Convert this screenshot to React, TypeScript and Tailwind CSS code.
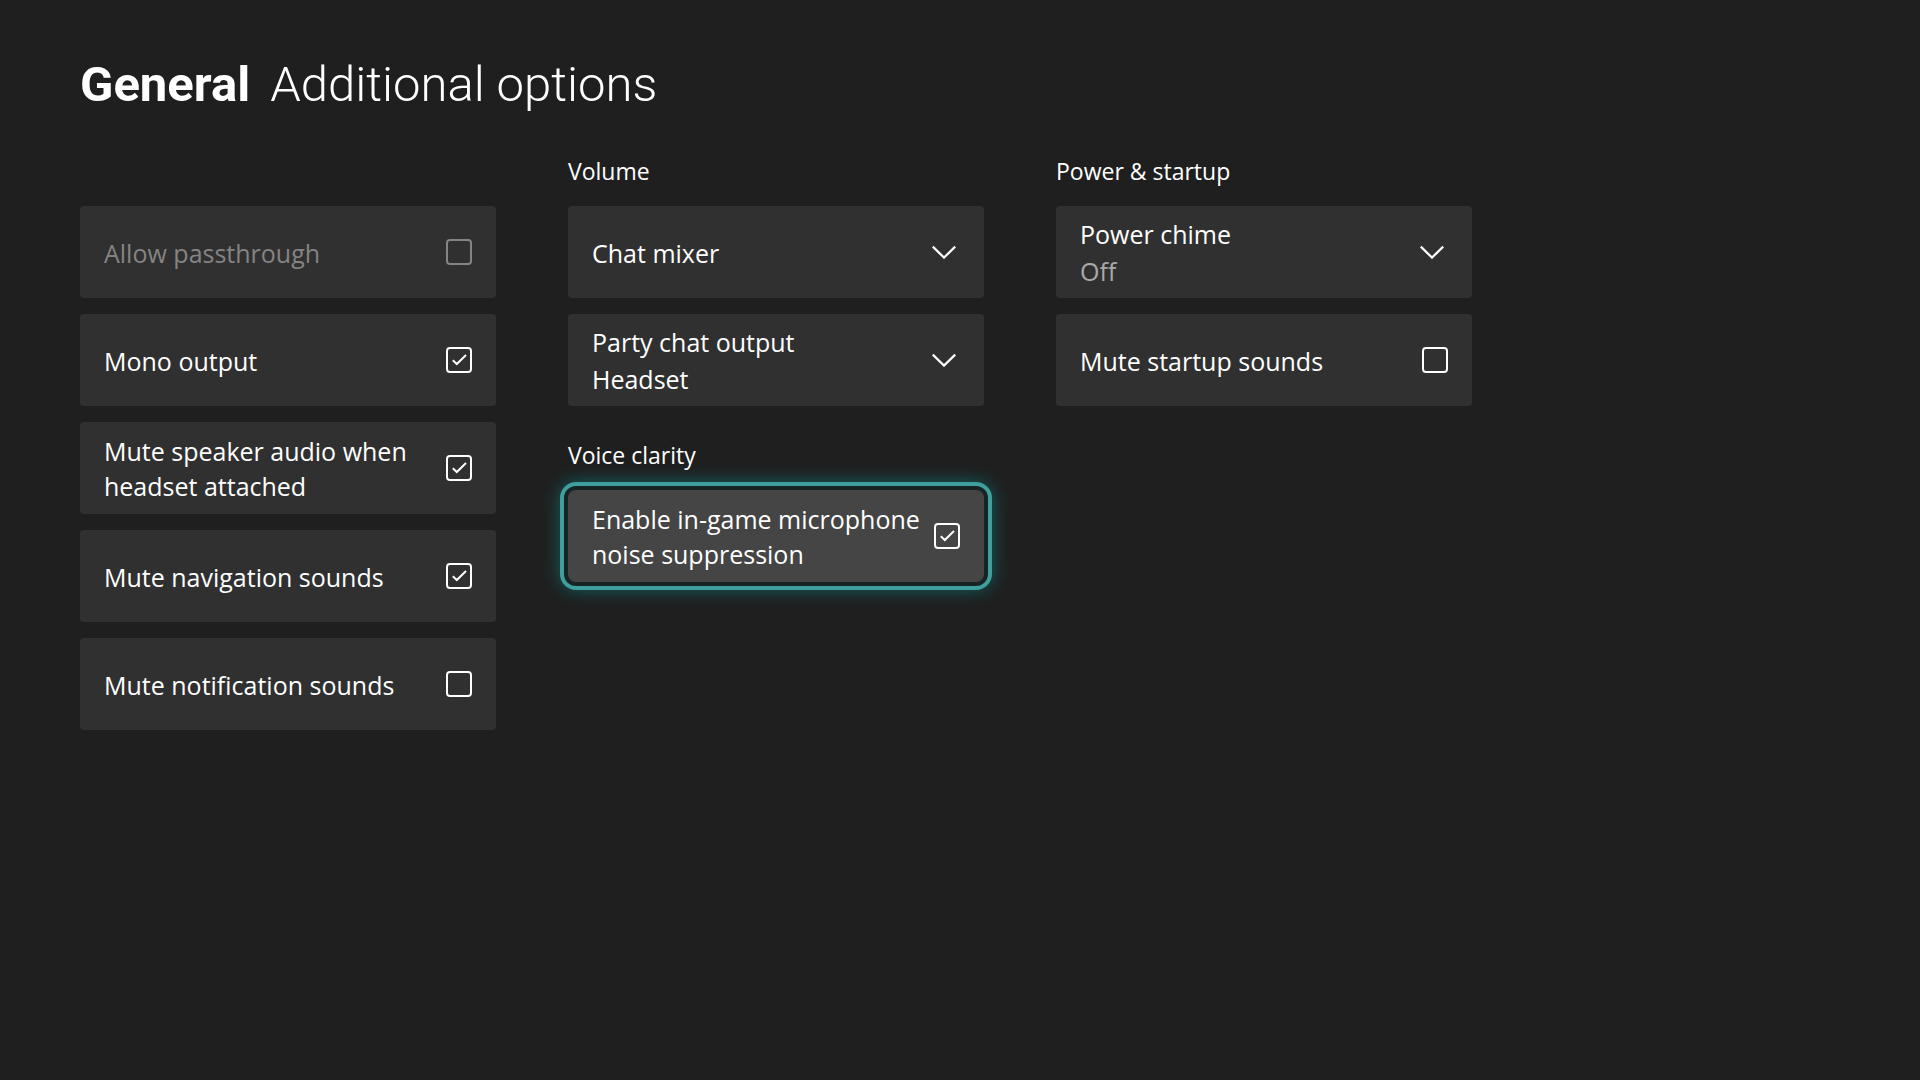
import React, { useState } from 'react';

interface CheckCardProps {
  label: string;
  defaultChecked?: boolean;
  disabled?: boolean;
  focused?: boolean;
}

interface SelectCardProps {
  label: string;
  options: string[];
  muted?: boolean;
}

const CheckCard: React.FC<CheckCardProps> = ({ label, defaultChecked = false, disabled = false, focused = false }) => {
  const [checked, setChecked] = useState(defaultChecked);

  return (
    <label
      className={`flex min-h-[92px] items-center justify-between gap-3 px-6 text-[25px] leading-[35px] ${
        disabled ? 'text-[#848484]' : 'text-white'
      } ${
        focused
          ? 'rounded-lg bg-[#454545] shadow-[0_0_0_4px_#182424,0_0_0_8px_#3f9f9f,0_0_18px_8px_#10605f]'
          : 'rounded bg-[#303030]'
      }`}
    >
      <span className="pt-0.5">{label}</span>
      <span className="relative h-[26px] w-[26px] shrink-0">
        <input
          type="checkbox"
          checked={checked}
          disabled={disabled}
          onChange={(e) => setChecked(e.target.checked)}
          className="block h-[26px] w-[26px] appearance-none rounded border-2 border-current outline-none"
        />
        {checked && (
          <svg viewBox="0 0 26 26" fill="none" className="pointer-events-none absolute inset-0 h-[26px] w-[26px]">
            <path d="M6.8 13.2 L10.8 17 L20 8" stroke="currentColor" strokeWidth="2" />
          </svg>
        )}
      </span>
    </label>
  );
};

const Chevron: React.FC = () => (
  <svg viewBox="0 0 24 14" fill="none" className="pointer-events-none mr-1 h-[14px] w-6 shrink-0">
    <path d="M0.8 1.6 L12 12.6 L23.2 1.6" stroke="currentColor" strokeWidth="2.2" />
  </svg>
);

const SelectCard: React.FC<SelectCardProps> = ({ label, options, muted = false }) => (
  <label className="flex min-h-[92px] items-center justify-between gap-3 rounded bg-[#303030] px-6 text-[25px] leading-[37px] text-white">
    <span className="flex min-w-0 flex-1 flex-col pt-0.5">
      {options[0] !== label && <span>{label}</span>}
      <select
        aria-label={label}
        className={`w-full appearance-none bg-transparent outline-none ${muted ? 'text-[#a9a9a9]' : 'text-white'}`}
      >
        {options.map((option) => (
          <option key={option}>{option}</option>
        ))}
      </select>
    </span>
    <Chevron />
  </label>
);

const SectionTitle: React.FC<{ children?: React.ReactNode }> = ({ children }) => (
  <h2 className="h-[34px] text-[23px] leading-[30px] text-white">{children}</h2>
);

const App: React.FC = () => {
  return (
    <main className="min-h-screen bg-[#1f1f1f] px-20 pt-14 pb-20 font-['Open_Sans','Noto_Sans',sans-serif] text-white">
      <h1 className="flex gap-5 font-[Roboto,sans-serif] text-[49px] leading-[58px]">
        <span className="font-bold">General</span>
        <span className="font-light">Additional options</span>
      </h1>

      <div className="mt-[42px] grid max-w-[1392px] grid-cols-3 items-start gap-[72px]">
        <section className="flex flex-col gap-4 pt-[50px]">
          <CheckCard label="Allow passthrough" disabled />
          <CheckCard label="Mono output" defaultChecked />
          <CheckCard label="Mute speaker audio when headset attached" defaultChecked />
          <CheckCard label="Mute navigation sounds" defaultChecked />
          <CheckCard label="Mute notification sounds" />
        </section>

        <div className="flex flex-col gap-[34px]">
          <section className="flex flex-col gap-4">
            <SectionTitle>Volume</SectionTitle>
            <SelectCard label="Chat mixer" options={['Chat mixer']} />
            <SelectCard label="Party chat output" options={['Headset', 'Speakers', 'Headset & speakers']} />
          </section>
          <section className="flex flex-col gap-4">
            <SectionTitle>Voice clarity</SectionTitle>
            <CheckCard label="Enable in-game microphone noise suppression" defaultChecked focused />
          </section>
        </div>

        <section className="flex flex-col gap-4">
          <SectionTitle>Power &amp; startup</SectionTitle>
          <SelectCard label="Power chime" options={['Off', 'On']} muted />
          <CheckCard label="Mute startup sounds" />
        </section>
      </div>
    </main>
  );
};

export default App;
